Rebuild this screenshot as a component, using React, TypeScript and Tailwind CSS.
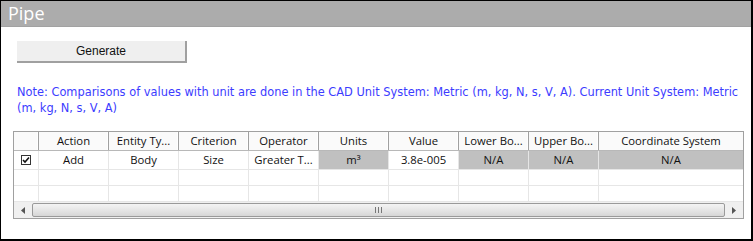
import React from "react";

const cols = [
  { label: "", w: "w-[25px]" },
  { label: "Action", w: "w-[70px]" },
  { label: "Entity Ty...", w: "w-[70px]" },
  { label: "Criterion", w: "w-[70px]" },
  { label: "Operator", w: "w-[70px]" },
  { label: "Units", w: "w-[70px]" },
  { label: "Value", w: "w-[70px]" },
  { label: "Lower Bo...", w: "w-[70px]" },
  { label: "Upper Bo...", w: "w-[70px]" },
  { label: "Coordinate System", w: "flex-1" },
];

const row: { text: React.ReactNode; gray?: boolean }[] = [
  { text: "" },
  { text: "Add" },
  { text: "Body" },
  { text: "Size" },
  { text: "Greater T..." },
  { text: "m³", gray: true },
  { text: "3.8e-005" },
  { text: "N/A", gray: true },
  { text: "N/A", gray: true },
  { text: "N/A", gray: true },
];

export default function App() {
  const ui = { fontFamily: '"Open Sans", "Noto Sans", sans-serif' };
  return (
    <div className="w-[753px] h-[241px] bg-white border-t border-l border-r-[2px] border-b-[2px] border-black flex flex-col overflow-hidden">
      <div
        className="h-[26px] bg-[#acacac] border-b border-[#a2a2a2] text-white text-[18px] leading-[24px] pl-[7px]"
        style={ui}
      >
        Pipe
      </div>
      <div className="pl-[16px] pt-[14px]">
        <div
          className="w-[170px] h-[22px] bg-[#efefef] border-r-[2px] border-b-[2px] border-[#a0a0a0] text-[12px] leading-[20px] text-center text-[#111]"
          style={{ fontFamily: '"Liberation Sans", Arial, sans-serif' }}
        >
          Generate
        </div>
      </div>
      <div
        className="pl-[16px] pt-[21px] text-[#3c3cff] text-[11.4px] leading-[16px] whitespace-nowrap"
        style={{ fontFamily: '"DejaVu Sans", sans-serif' }}
      >
        <div>
          Note: Comparisons of values with unit are done in the CAD Unit System: Metric (m, kg, N, s, V, A). Current Unit System: Metric
        </div>
        <div>(m, kg, N, s, V, A)</div>
      </div>
      <div className="ml-[12px] mt-[15px] w-[731px] border border-[#a0a0a0] flex flex-col text-[11.3px] text-[#111]" style={ui}>
        <div className="flex h-[19px] bg-[#fafafa] border-b border-[#b8b8b8]">
          {cols.map((c, i) => (
            <div
              key={i}
              className={`${c.w} shrink-0 text-center leading-[18px] whitespace-nowrap overflow-hidden ${
                i < cols.length - 1 ? "border-r border-[#a0a0a0] shadow-[inset_-1px_0_0_#fff]" : ""
              }`}
            >
              {c.label}
            </div>
          ))}
        </div>
        <div className="flex h-[19px] border-b border-[#e6e6e6]">
          {row.map((c, i) => (
            <div
              key={i}
              className={`${cols[i].w} shrink-0 text-center leading-[18px] whitespace-nowrap ${
                c.gray ? "bg-[#c0c0c0]" : "bg-white"
              } ${i < row.length - 1 ? "border-r border-[#e6e6e6]" : ""}`}
            >
              {i === 0 ? (
                <div className="ml-[7px] mt-[4px] w-[10px] h-[10px] border border-[#333] bg-white flex items-center justify-center">
                  <svg width="8" height="8" viewBox="0 0 8 8">
                    <path d="M1 4 L3 6 L7 1.5" stroke="#111" strokeWidth="1.6" fill="none" />
                  </svg>
                </div>
              ) : (
                c.text
              )}
            </div>
          ))}
        </div>
        {[0, 1].map((r) => (
          <div key={r} className="flex h-[16px] border-b border-[#e6e6e6]">
            {cols.map((c, i) => (
              <div
                key={i}
                className={`${c.w} shrink-0 ${i < cols.length - 1 ? "border-r border-[#e6e6e6]" : ""}`}
              />
            ))}
          </div>
        ))}
        <div className="flex items-center h-[16px] bg-[#f0f0f0]">
          <div className="w-[18px] flex justify-center">
            <svg width="4" height="7" viewBox="0 0 4 7">
              <path d="M4 0 L0 3.5 L4 7 Z" fill="#555" />
            </svg>
          </div>
          <div className="flex-1 h-[14px] rounded-[2px] border border-[#9a9a9a] bg-gradient-to-b from-[#f4f4f4] via-[#e6e6e6] to-[#d6d6d6] flex items-center justify-center">
            <svg width="7" height="6" viewBox="0 0 7 6">
              <path d="M0.5 0 V6 M3.5 0 V6 M6.5 0 V6" stroke="#777" strokeWidth="1" />
            </svg>
          </div>
          <div className="w-[18px] flex justify-center">
            <svg width="4" height="7" viewBox="0 0 4 7">
              <path d="M0 0 L4 3.5 L0 7 Z" fill="#555" />
            </svg>
          </div>
        </div>
      </div>
    </div>
  );
}
